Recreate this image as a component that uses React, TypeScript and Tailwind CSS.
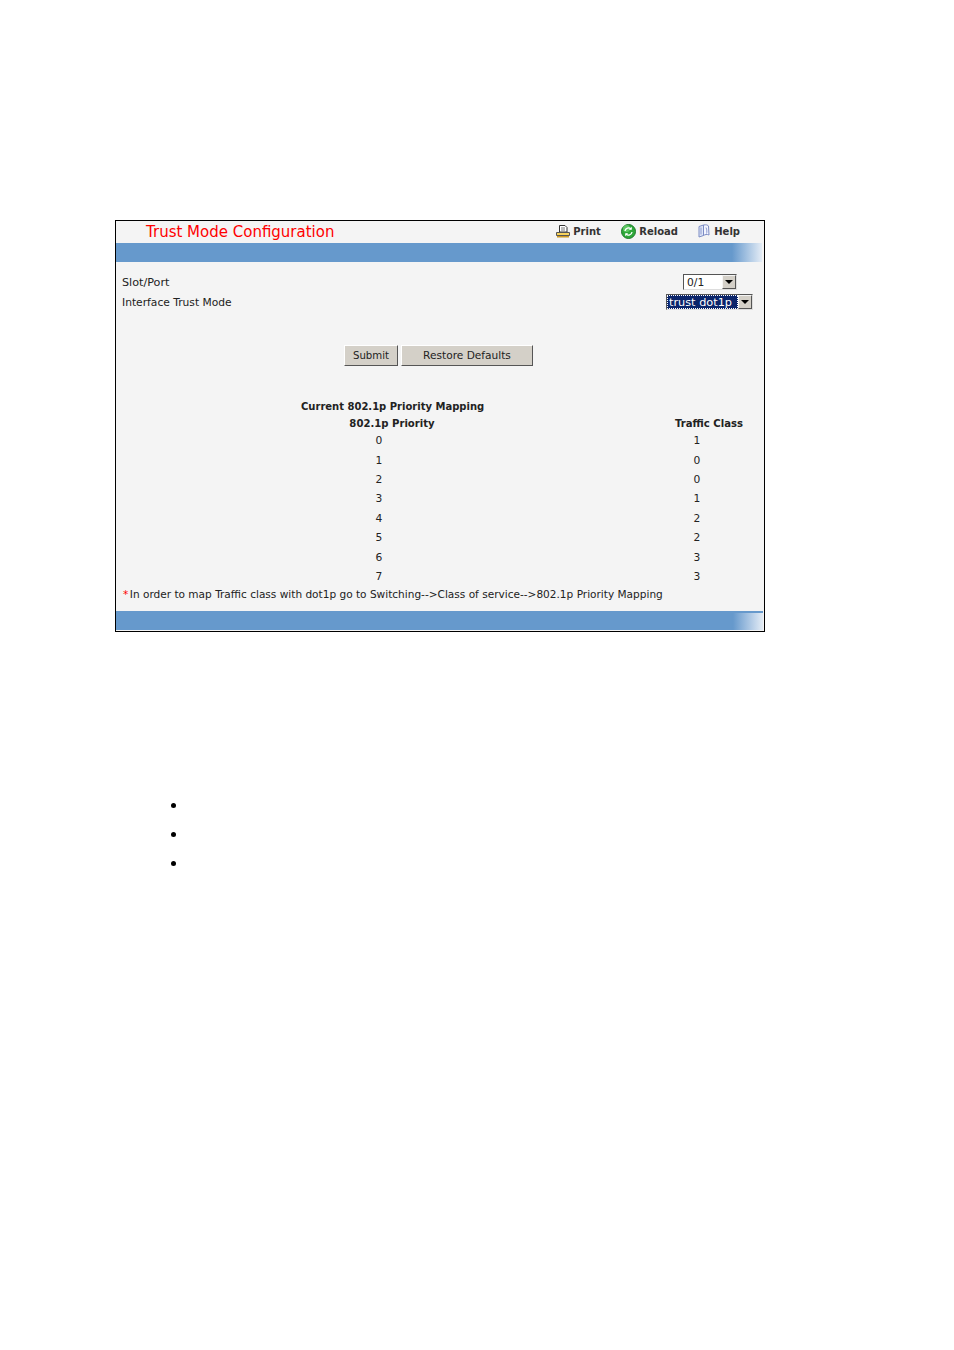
const font = { fontFamily: '"DejaVu Sans", sans-serif' };

const rows = [
  ["0", "1"],
  ["1", "0"],
  ["2", "0"],
  ["3", "1"],
  ["4", "2"],
  ["5", "2"],
  ["6", "3"],
  ["7", "3"],
];

function PrinterIcon() {
  return (
    <svg width="14" height="13" viewBox="0 0 14 13" className="mr-[3px]">
      <path d="M3.500 .5h5.500l2 2v4.500h-7.500z" fill="#fff" stroke="#333" />
      <path d="M5 3h4M5 5h4" stroke="#777" />
      <path d="M.5 7.500h13v3h-13z" fill="#f7d35c" stroke="#555" />
      <path d="M1 11h12v1.500H1z" fill="#c9961f" />
    </svg>
  );
}

function ReloadIcon() {
  return (
    <svg width="15" height="15" viewBox="0 0 15 15" className="mr-[3px]">
      <circle cx="7.500" cy="7.500" r="7" fill="#2fa83a" stroke="#1d7a2a" />
      <circle cx="5.500" cy="4.500" r="3.500" fill="#7fe07f" opacity=".6" />
      <path d="M4 7a3.500 3.500 0 0 1 6-2M11 8a3.500 3.500 0 0 1-6 2" fill="none" stroke="#fff" strokeWidth="1.300" />
      <path d="M10.800 2.800v3h-3zM4.200 12.200v-3h3z" fill="#fff" />
    </svg>
  );
}

function HelpIcon() {
  return (
    <svg width="14" height="14" viewBox="0 0 14 14" className="mr-[3px]">
      <path d="M2 2.500 6.500 1v10.500L2 13z" fill="#dfe6f7" stroke="#7c8cc4" />
      <path d="M6.500 1C9 .5 11 1 11.500 2l.5 9c-2-1-4-.5-5.500.5z" fill="#f4f6ff" stroke="#7c8cc4" />
      <path d="M4 3.500v7M9 3.500c1 2 1 5 .5 6" fill="none" stroke="#8c9ad0" />
    </svg>
  );
}

function Arrow() {
  return (
    <span className="flex h-[14px] w-[14px] items-center justify-center border border-t-[#f4f4f4] border-l-[#f4f4f4] border-r-[#555] border-b-[#555] bg-[#d4d0c8]">
      <span className="h-0 w-0 border-x-[4px] border-t-[4px] border-x-transparent border-t-black" />
    </span>
  );
}

function BlueBar({ className }: { className: string }) {
  return (
    <div className={`flex justify-end bg-[#6699cc] ${className}`}>
      <div className="w-[30px] bg-gradient-to-r from-[#6699cc] to-[#e4ecf5]" />
    </div>
  );
}

export default function App() {
  return (
    <div className="min-h-[1350px] bg-white pl-[115px] pt-[220px] text-[10.700px] text-[#222]" style={font}>
      <div className="h-[412px] w-[650px] border border-black bg-[#f4f4f4]">
        <div className="flex h-[22px] items-center">
          <h1 className="ml-[30px] flex-1 text-[15px] leading-none text-[#ff0000]">Trust Mode Configuration</h1>
          <div className="flex -translate-y-px items-center text-[10px] font-bold text-[#333]">
            <span className="flex w-[65px] items-center"><PrinterIcon />Print</span>
            <span className="flex w-[76px] items-center"><ReloadIcon />Reload</span>
            <span className="mr-[24px] flex items-center"><HelpIcon />Help</span>
          </div>
        </div>
        <BlueBar className="mr-[2px] h-[19px]" />

        <div className="mt-[11px] flex h-[20px] items-center pl-[6px] pr-[27px]">
          <span className="flex-1 text-[11.200px]">Slot/Port</span>
          <span className="flex h-[16px] w-[54px] -translate-y-px items-center justify-between border border-t-[#555] border-l-[#555] border-r-[#ddd] border-b-[#ddd] bg-white pl-[3px]">
            <span className="translate-y-px">0/1</span><Arrow />
          </span>
        </div>
        <div className="flex h-[20px] items-center pl-[6px] pr-[11px]">
          <span className="flex-1">Interface Trust Mode</span>
          <span className="flex h-[16px] w-[87px] -translate-y-px items-center justify-between border border-t-[#555] border-l-[#555] border-r-[#ddd] border-b-[#ddd] bg-white">
            <span className="h-[14px] flex-1 overflow-hidden whitespace-nowrap border border-dotted border-white bg-[#0a246a] pl-px text-[11.300px] leading-[14px] text-white">trust dot1p</span>
            <Arrow />
          </span>
        </div>

        <div className="ml-[228px] mt-[32px] flex gap-[3px]">
          <button className="h-[21px] w-[54px] border border-t-white border-l-white border-r-[#555] border-b-[#555] bg-[#d4d0c8] text-[10.200px]">Submit</button>
          <button className="h-[21px] w-[132px] border border-t-white border-l-white border-r-[#555] border-b-[#555] bg-[#d4d0c8] text-[10.600px]">Restore Defaults</button>
        </div>

        <div className="ml-[185px] mt-[32px] w-[182px] whitespace-nowrap text-center text-[10px] font-bold leading-[17px]">Current 802.1p Priority Mapping</div>
        <div className="flex text-[10.100px] font-bold leading-[17px]">
          <span className="ml-[185px] w-[182px] text-center">802.1p Priority</span>
          <span className="ml-[190px] w-[72px] text-center">Traffic Class</span>
        </div>
        <div className="-mt-[0.5px]">
          {rows.map(([a, b]) => (
            <div key={a} className="flex h-[19.400px] items-center">
              <span className="ml-[253px] w-[20px] text-center">{a}</span>
              <span className="ml-[298px] w-[20px] text-center">{b}</span>
            </div>
          ))}
        </div>
        <div className="ml-[7px] mt-[0.5px] whitespace-nowrap text-[10.560px] leading-[14px]">
          <span className="mr-[1.500px] text-[#ff0000]">*</span>In order to map Traffic class with dot1p go to Switching--&gt;Class of service--&gt;802.1p Priority Mapping
        </div>
        <div className="mt-[10px]">
          <BlueBar className="mr-[1px] h-[19px] border-t-2 border-[#6699cc]" />
        </div>
      </div>

      <ul className="ml-[56px] mt-[171px] flex flex-col gap-[24px]">
        <li className="h-[5px] w-[5px] rounded-full bg-black" />
        <li className="h-[5px] w-[5px] rounded-full bg-black" />
        <li className="h-[5px] w-[5px] rounded-full bg-black" />
      </ul>
    </div>
  );
}
